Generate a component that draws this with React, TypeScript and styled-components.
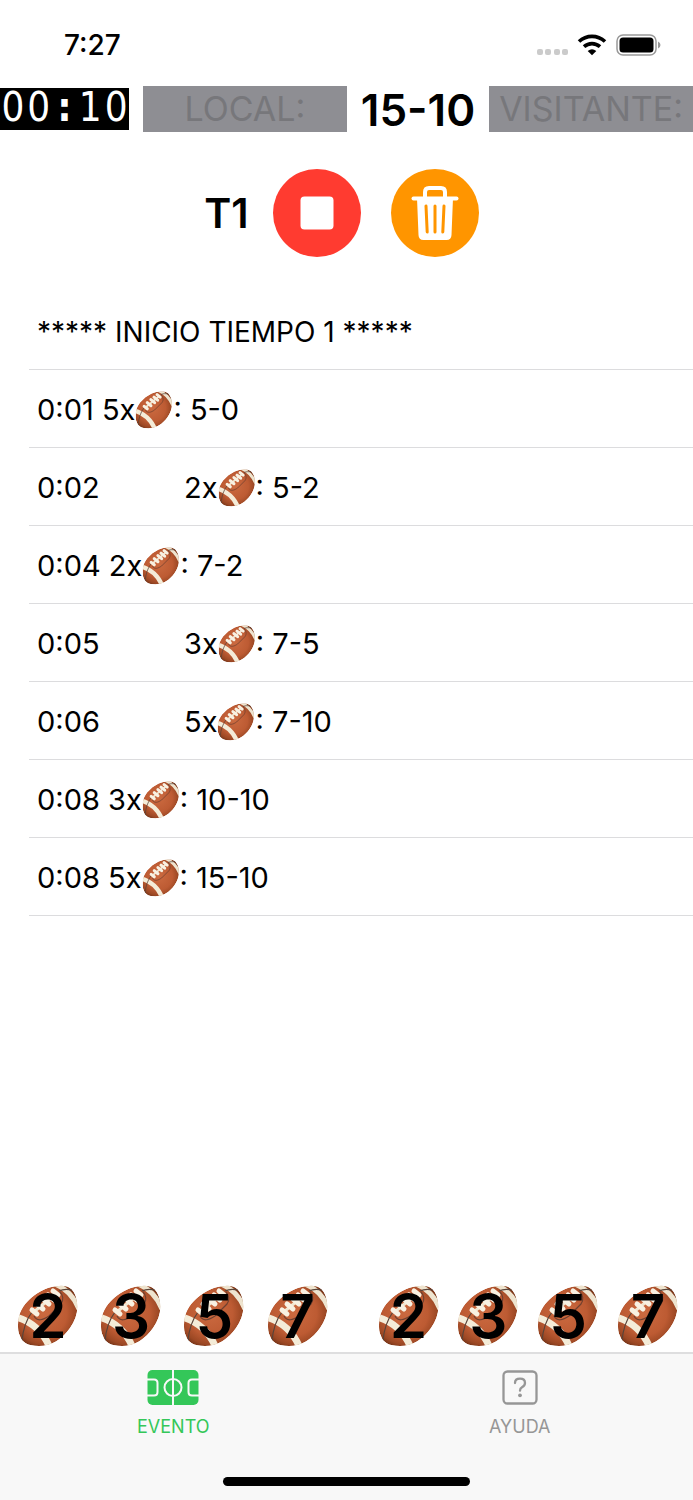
import React from 'react';
import styled, { createGlobalStyle } from 'styled-components';

const GlobalStyle = createGlobalStyle`
  * { box-sizing: border-box; }
  body { margin: 0; background: #fff; color: #000; font-family: Inter, "Liberation Sans", sans-serif; }
  button { font: inherit; color: inherit; border: 0; padding: 0; background: none; cursor: pointer; }
`;

const Screen = styled.div`
  min-height: 100vh;
  display: flex;
  flex-direction: column;
`;

const StatusBar = styled.header`
  height: 86px;
  padding: 3px 32px 0 64px;
  display: flex;
  align-items: center;
  justify-content: space-between;
`;

const StatusTime = styled.time`
  font-size: 28px;
  line-height: 32px;
  font-weight: 500;
`;

const StatusIcons = styled.div`
  display: flex;
  align-items: center;
  gap: 9px;
`;

const Scoreboard = styled.section`
  display: grid;
  grid-template-columns: 129px minmax(0, 1fr) auto minmax(0, 1fr);
  column-gap: 14px;
  align-items: center;
`;

const Timer = styled.time`
  height: 42px;
  background: #000;
  color: #fff;
  display: grid;
  grid-template-columns: repeat(5, 1fr);
  text-align: center;
  font-family: "DejaVu Sans Condensed", "DejaVu Sans", sans-serif;
  font-size: 40px;
  line-height: 38px;
`;

const Colon = styled.b`
  font-weight: 700;
`;

const TeamInput = styled.input`
  width: 100%;
  height: 46px;
  border: 0;
  border-radius: 0;
  padding: 0;
  background: #8e8e93;
  text-align: center;
  font: 400 34px/46px Inter, "Liberation Sans", sans-serif;
  color: #000;
  &::placeholder { color: #77777b; opacity: 1; }
`;

const Score = styled.output`
  padding-top: 2px;
  font-size: 44px;
  line-height: 44px;
  font-weight: 600;
`;

const Controls = styled.section`
  display: flex;
  justify-content: center;
  align-items: center;
  padding: 37px 10px 0 0;
  gap: 30px;
`;

const Period = styled.h1`
  margin: 0 -6px 0 0;
  font-size: 41px;
  line-height: 48px;
  font-weight: 600;
`;

const RoundButton = styled.button<{ $color: string }>`
  width: 88px;
  height: 88px;
  border-radius: 50%;
  background: ${(p) => p.$color};
  display: grid;
  place-items: center;
`;

const Log = styled.ul`
  flex: 1;
  margin: 35px 0 0 29px;
  padding: 0;
  list-style: none;
`;

const LogRow = styled.li<{ $heading?: boolean }>`
  height: 78px;
  padding: 2px 8px 0;
  border-bottom: 1px solid #dcdcde;
  display: flex;
  align-items: center;
  font-size: ${(p) => (p.$heading ? '28px' : '29px')};
  line-height: 36px;
  white-space: pre;
`;

const RowTime = styled.time<{ $away?: boolean }>`
  min-width: ${(p) => (p.$away ? '147px' : '0')};
`;

const Pads = styled.section`
  display: grid;
  grid-template-columns: 31fr 30fr;
  column-gap: 49px;
  padding: 0 14px 5px 17px;
`;

const Team = styled.div`
  display: flex;
  justify-content: space-between;
`;

const PointButton = styled.button`
  display: grid;
  place-items: center;
  width: 62px;
  height: 62px;
  & > * { grid-area: 1 / 1; }
`;

const Points = styled.span`
  z-index: 1;
  font-size: 60px;
  line-height: 60px;
  font-weight: 600;
`;

const TabBar = styled.nav`
  height: 148px;
  background: #f8f8f8;
  border-top: 2px solid #dededf;
  display: grid;
  grid-template-columns: 1fr 1fr;
  grid-template-rows: 1fr auto;
  justify-items: center;
`;

const Tab = styled.a<{ $active?: boolean }>`
  display: flex;
  flex-direction: column;
  align-items: center;
  padding-top: 16px;
  gap: 10px;
  color: ${(p) => (p.$active ? '#34c759' : '#969696')};
  text-decoration: none;
  font-size: 18px;
  line-height: 24px;
`;

const HomeIndicator = styled.div`
  grid-column: 1 / -1;
  width: 247px;
  height: 9px;
  border-radius: 5px;
  background: #000;
  margin-bottom: 14px;
`;

function Ball({ size }: { size: number }) {
  const id = React.useId();
  const shape = 'M1 40C1 28 6 20 14 13C22 6 32 1 42 1C52 0 56 4 59 12C62 23 60 33 53 43C45 54 35 61 22 61C10 61 5 57 3 51C1 47 1 44 1 40Z';
  return (
    <svg width={size} height={size} viewBox="0 0 62 62" role="img" aria-label="balón">
      <defs>
        <radialGradient id={id + 'g'} cx="0.45" cy="0.45" r="0.62">
          <stop offset="0" stopColor="#cb6a40" />
          <stop offset="0.6" stopColor="#bd5b33" />
          <stop offset="0.85" stopColor="#9c4824" />
          <stop offset="1" stopColor="#6b2f15" />
        </radialGradient>
        <clipPath id={id + 'c'}><path d={shape} /></clipPath>
      </defs>
      <g clipPath={`url(#${id}c)`}>
        <path d={shape} fill={`url(#${id}g)`} />
        <path d="M-1 32C13 36 26 46 33 63" fill="none" stroke="#f4ecd8" strokeWidth="7" />
        <path d="M38 -1C48 3 57 12 62 24" fill="none" stroke="#eee4cf" strokeWidth="5" />
        <path d="M5 56C6 44 9 35 15 27M42 6C46 4 50 4 55 5" fill="none" stroke="#594338" strokeWidth="1.2" />
        <path d="M17 31C20 37 26 35 32 31L44 19C47 15 46 10 43 7" fill="none" stroke="#6e4030" strokeWidth="1.2" />
      </g>
      <path d="M18 26L40 8" stroke="#f1e6d0" strokeWidth="3" />
      <path d="M15 25L20 29M20 19L26 24M26 14L32 19M31 10L37 15M36 6L41 10" stroke="#f8f1e2" strokeWidth="5" strokeLinecap="round" />
    </svg>
  );
}

const WifiIcon = () => (
  <svg width="30" height="22" viewBox="0 0 30 22" aria-hidden="true">
    <path d="M2 7.5C9.5 .7 20.5 .7 28 7.5M7 12.7C11.8 8.5 18.2 8.5 23 12.7" fill="none" stroke="#000" strokeWidth="3.7" />
    <path d="M10.700 17Q15 13.500 19.300 17L15 21.300Z" />
  </svg>
);

const SignalDots = () => (
  <svg width="31" height="22" viewBox="0 0 31 22" fill="#cbcbcb" aria-hidden="true">
    {[0, 8, 17, 25].map((x) => <rect key={x} x={x} y="15" width="6" height="6" rx="2" />)}
  </svg>
);

const BatteryIcon = () => (
  <svg width="45" height="22" viewBox="0 0 45 22" aria-hidden="true">
    <rect x="1" y="1" width="39" height="20" rx="6" fill="none" stroke="#999" strokeWidth="1.5" />
    <rect x="3.5" y="3.5" width="34" height="15" rx="3.5" />
    <path d="M42 7.5Q44.5 8.5 44.5 11T42 14.5Z" fill="#999" />
  </svg>
);

const StopIcon = () => (
  <svg width="34" height="34" viewBox="0 0 34 34" aria-hidden="true"><rect x="0.5" y="0.5" width="33" height="33" rx="4" fill="#fff" /></svg>
);

const TrashIcon = () => (
  <svg width="48" height="56" viewBox="0 0 48 56" aria-hidden="true">
    <path d="M14 12V7Q14 3 18 3H30Q34 3 34 7V12" fill="none" stroke="#fff" strokeWidth="4" />
    <path d="M2.5 13.5H45.5" stroke="#fff" strokeWidth="4" strokeLinecap="round" />
    <path d="M6 13H42L40.5 50Q40.3 55 35.5 55H12.5Q7.7 55 7.5 50Z" fill="#fff" />
    <path d="M15 21L16.2 47M24 21V47M33 21L31.8 47" stroke="#ff9500" strokeWidth="3" strokeLinecap="round" />
  </svg>
);

const FieldIcon = () => (
  <svg width="52" height="35" viewBox="0 0 52 35" aria-hidden="true">
    <rect x="0.5" width="51" height="35" rx="5" fill="#34c759" />
    <g fill="none" stroke="#f8f8f8" strokeWidth="2">
      <path d="M26 0V35M0 9.5H7Q10.5 9.5 10.5 13V22Q10.5 25.5 7 25.5H0M52 9.5H45Q41.5 9.5 41.5 13V22Q41.5 25.5 45 25.5H52" />
      <circle cx="26" cy="17.5" r="8.5" />
    </g>
  </svg>
);

const HelpIcon = () => (
  <svg width="36" height="35" viewBox="0 0 36 35" fill="none" stroke="#969696" aria-hidden="true">
    <rect x="1.5" y="1.5" width="33" height="32" rx="4" strokeWidth="2.3" />
    <path d="M13 13Q13 8.7 18 8.7T23 13Q23 15.5 20 17.3Q18 18.5 18 20.7" strokeWidth="2.3" strokeLinecap="round" />
    <circle cx="18" cy="25.3" r="1.9" fill="#969696" stroke="none" />
  </svg>
);

const plays = [
  { time: '0:01', points: 5, score: '5-0' },
  { time: '0:02', points: 2, score: '5-2', away: true },
  { time: '0:04', points: 2, score: '7-2' },
  { time: '0:05', points: 3, score: '7-5', away: true },
  { time: '0:06', points: 5, score: '7-10', away: true },
  { time: '0:08', points: 3, score: '10-10' },
  { time: '0:08', points: 5, score: '15-10' },
];

export default function App() {
  return (
    <Screen>
      <GlobalStyle />
      <StatusBar>
        <StatusTime>7:27</StatusTime>
        <StatusIcons><SignalDots /><WifiIcon /><BatteryIcon /></StatusIcons>
      </StatusBar>
      <Scoreboard>
        <Timer><span>0</span><span>0</span><Colon>:</Colon><span>1</span><span>0</span></Timer>
        <TeamInput aria-label="Local" placeholder="LOCAL:" />
        <Score>15-10</Score>
        <TeamInput aria-label="Visitante" placeholder="VISITANTE:" />
      </Scoreboard>
      <Controls>
        <Period>T1</Period>
        <RoundButton $color="#ff3b30" aria-label="Detener"><StopIcon /></RoundButton>
        <RoundButton $color="#ff9500" aria-label="Borrar"><TrashIcon /></RoundButton>
      </Controls>
      <Log>
        <LogRow $heading>***** INICIO TIEMPO 1 *****</LogRow>
        {plays.map((p) => (
          <LogRow key={p.time + p.score}>
            <RowTime $away={p.away}>{p.time + ' '}</RowTime>
            <span>{p.points}x</span>
            <Ball size={38} />
            <span>: {p.score}</span>
          </LogRow>
        ))}
      </Log>
      <Pads>
        {['Local', 'Visitante'].map((team) => (
          <Team key={team}>
            {[2, 3, 5, 7].map((n) => (
              <PointButton key={n} aria-label={`${team} ${n}`}>
                <Ball size={62} />
                <Points>{n}</Points>
              </PointButton>
            ))}
          </Team>
        ))}
      </Pads>
      <TabBar>
        <Tab href="#evento" $active><FieldIcon />EVENTO</Tab>
        <Tab href="#ayuda"><HelpIcon />AYUDA</Tab>
        <HomeIndicator />
      </TabBar>
    </Screen>
  );
}
